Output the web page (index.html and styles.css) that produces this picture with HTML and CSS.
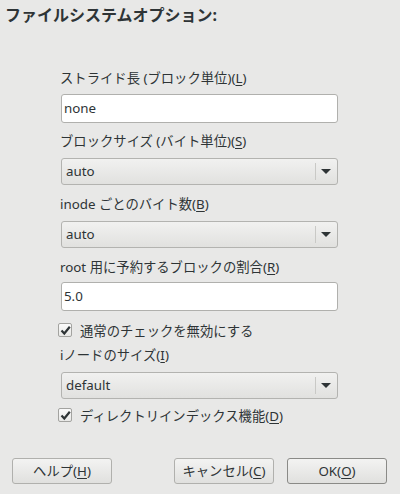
FILE: index.html
```html
<!DOCTYPE html>
<html lang="ja">
<head>
<meta charset="utf-8">
<link rel="stylesheet" href="styles.css">
</head>
<body>
<div class="dialog">
  <h1 class="title">ファイルシステムオプション:</h1>
  <div class="form">
    <div class="label l1">ストライド長 (ブロック単位)(<u>L</u>)</div>
    <div class="entry e1">none</div>
    <div class="label l2">ブロックサイズ (バイト単位)(<u>S</u>)</div>
    <div class="combo c1"><span class="val">auto</span><span class="sep"></span><span class="arrow"></span></div>
    <div class="label l3">inode ごとのバイト数(<u>B</u>)</div>
    <div class="combo c2"><span class="val">auto</span><span class="sep"></span><span class="arrow"></span></div>
    <div class="label l4">root 用に予約するブロックの割合(<u>R</u>)</div>
    <div class="entry e2">5.0</div>
    <div class="check k1"><span class="box"><svg width="11" height="11" viewBox="0 0 11 11"><path d="M1.5 5.5 L4.3 8.5 L9.8 1.8" fill="none" stroke="#2e3436" stroke-width="2.2"/></svg></span><span>通常のチェックを無効にする</span></div>
    <div class="label l5">iノードのサイズ(<u>I</u>)</div>
    <div class="combo c3"><span class="val">default</span><span class="sep"></span><span class="arrow"></span></div>
    <div class="check k2"><span class="box"><svg width="11" height="11" viewBox="0 0 11 11"><path d="M1.5 5.5 L4.3 8.5 L9.8 1.8" fill="none" stroke="#2e3436" stroke-width="2.2"/></svg></span><span>ディレクトリインデックス機能(<u>D</u>)</span></div>
  </div>
  <div class="buttons">
    <div class="btn">ヘルプ(<u>H</u>)</div>
    <div class="spacer"></div>
    <div class="btn">キャンセル(<u>C</u>)</div>
    <div class="btn default">OK(<u>O</u>)</div>
  </div>
</div>
</body>
</html>
```

FILE: styles.css
```css
html, body {
  margin: 0;
  padding: 0;
}
body {
  width: 400px;
  height: 494px;
  background: #e8e8e7;
  color: #2e3436;
  font-family: "Noto Sans", "Noto Sans CJK JP", sans-serif;
  font-size: 13.33px;
  overflow: hidden;
}
.dialog {
  display: flex;
  flex-direction: column;
  height: 494px;
}
.title {
  margin: 3px 0 0 5px;
  font-size: 16px;
  font-weight: bold;
  line-height: 24px;
  height: 24px;
}
.form {
  display: flex;
  flex-direction: column;
  margin-left: 61px;
  width: 277px;
}
u {
  text-decoration: underline;
  text-underline-offset: 2px;
}
.label {
  line-height: 20px;
  height: 20px;
  margin-left: -1px;
  white-space: nowrap;
}
.l1 { margin-top: 41px; }
.l2 { margin-top: 8px; }
.l3 { margin-top: 9px; }
.l4 { margin-top: 9px; }
.l5 { margin-top: 5px; }
.entry {
  box-sizing: border-box;
  height: 29px;
  background: #ffffff;
  border: 1px solid #b0b0ad;
  border-radius: 3px;
  padding-left: 2px;
  line-height: 27px;
}
.e1 { margin-top: 6px; }
.e2 { margin-top: 5px; }
.combo {
  box-sizing: border-box;
  height: 27px;
  margin-top: 7px;
  display: flex;
  align-items: center;
  background: linear-gradient(#f1f1f0, #e1e1df);
  border: 1px solid #b3b3b0;
  border-radius: 3px;
}
.combo .val {
  flex: 1;
  padding-left: 4px;
  line-height: 25px;
}
.combo .sep {
  width: 1px;
  height: 17px;
  background: #c9c9c6;
  margin-right: 5px;
}
.combo .arrow {
  width: 0;
  height: 0;
  border-left: 5px solid transparent;
  border-right: 5px solid transparent;
  border-top: 5px solid #2e3436;
  margin-right: 6px;
}
.check {
  display: flex;
  align-items: center;
  height: 20px;
  margin-left: -3px;
  white-space: nowrap;
}
.k1 { margin-top: 9px; }
.k2 { margin-top: 6px; }
.check .box {
  box-sizing: border-box;
  width: 14px;
  height: 14px;
  border: 1px solid #a3a3a0;
  border-radius: 2px;
  background: linear-gradient(#fafafa, #e8e8e6);
  display: flex;
  align-items: center;
  justify-content: center;
  margin-right: 8px;
}
.check .box svg { display: block; }
.buttons {
  display: flex;
  margin-top: 33px;
  padding: 0 13px 0 12px;
  gap: 13px;
}
.spacer { flex: 1; }
.btn {
  box-sizing: border-box;
  width: 100px;
  height: 26px;
  border: 1px solid #b0b0ad;
  border-radius: 3px;
  background: linear-gradient(#f3f3f2, #e0e0de);
  text-align: center;
  line-height: 24px;
  white-space: nowrap;
}
.btn.default {
  border-color: #8a8a87;
}
```
